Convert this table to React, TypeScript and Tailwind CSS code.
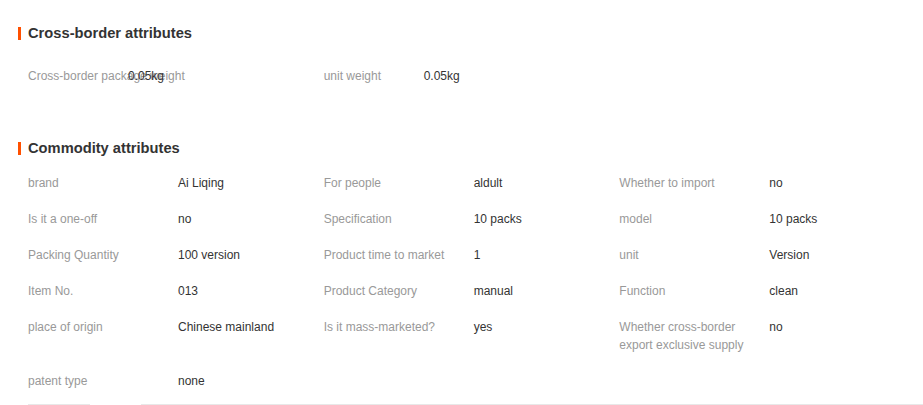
import React from "react";

const cross: [string, string][] = [
  ["Cross-border package weight", "0.05kg"],
  ["unit weight", "0.05kg"],
];

const rows: [string, string][][] = [
  [["brand", "Ai Liqing"], ["For people", "aldult"], ["Whether to import", "no"]],
  [["Is it a one-off", "no"], ["Specification", "10 packs"], ["model", "10 packs"]],
  [["Packing Quantity", "100 version"], ["Product time to market", "1"], ["unit", "Version"]],
  [["Item No.", "013"], ["Product Category", "manual"], ["Function", "clean"]],
  [["place of origin", "Chinese mainland"], ["Is it mass-marketed?", "yes"], ["Whether cross-border export exclusive supply", "no"]],
  [["patent type", "none"]],
];

function Heading({ children }: { children: React.ReactNode }) {
  return (
    <div className="flex items-center h-[20px] pl-[18px]">
      <span className="w-[3px] h-[13px] bg-[#ff5000] mr-[7px]" />
      <span className="text-[14.7px] font-bold text-[#333333] leading-[20px]">{children}</span>
    </div>
  );
}

export default function App() {
  return (
    <div
      className="w-[923px] h-[405px] bg-white overflow-hidden"
      style={{ fontFamily: '"Liberation Sans", Arial, sans-serif' }}
    >
      <div className="pt-[23px]">
        <Heading>Cross-border attributes</Heading>
        <div className="pl-[28px] mt-[15px] grid grid-cols-3 w-[915px]">
          {cross.map(([k, v]) => (
            <div key={k} className="flex py-[9px] text-[12px] leading-[18px]">
              <div className="w-[100px] shrink-0 whitespace-nowrap text-[#999999]">{k}</div>
              <div className="text-[#333333] relative">{v}</div>
            </div>
          ))}
        </div>
        <div className="mt-[44px]">
          <Heading>Commodity attributes</Heading>
        </div>
        <div className="pl-[28px] mt-[7px] w-[915px]">
          {rows.map((r, i) => (
            <div key={i} className="grid grid-cols-3">
              {r.map(([k, v]) => (
                <div key={k} className="flex py-[9px] text-[12px] leading-[18px]">
                  <div className="w-[150px] shrink-0 pr-[20px] text-[#999999]">{k}</div>
                  <div className="text-[#333333]">{v}</div>
                </div>
              ))}
            </div>
          ))}
        </div>
        <div className="flex mt-[5px]">
          <div className="ml-[28px] w-[62px] h-px bg-[#e8e8e8]" />
          <div className="ml-[51px] flex-1 h-px bg-[#e8e8e8]" />
        </div>
      </div>
    </div>
  );
}
